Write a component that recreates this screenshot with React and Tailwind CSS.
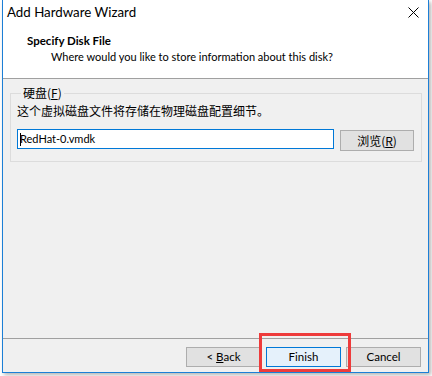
import React from "react";

const font = { fontFamily: 'Lato, "Noto Sans CJK SC", sans-serif' };
const cjk = { fontFamily: '"Noto Sans CJK SC", sans-serif' };

function WinButton({ children, primary }) {
  return (
    <button
      className={
        primary
          ? "h-[20px] w-[75px] border border-[#0078d7] bg-[#e5f1fb] text-[11.5px] leading-none text-black"
          : "h-[20px] w-[75px] border border-[#adadad] bg-[#e1e1e1] text-[11.5px] leading-none text-black"
      }
    >
      {children}
    </button>
  );
}

export default function App() {
  return (
    <div className="relative h-[376px] w-[432px] overflow-hidden bg-white" style={font}>
      {/* dialog window */}
      <div className="ml-[2px] flex h-[373px] w-[427px] flex-col border-x border-b border-[#1c7fd6] bg-[#f0f0f0] shadow-[2px_2px_4px_rgba(0,0,0,0.3)]">
        {/* title bar */}
        <div className="flex h-[30px] items-start justify-between bg-white pl-[4px] pr-[9px]">
          <span className="pt-[4px] text-[13.3px] leading-[17px] text-black">Add Hardware Wizard</span>
          <svg className="mt-[7px]" width="11" height="11" viewBox="0 0 11 11">
            <path d="M0.5 0.5 L10.5 10.5 M10.5 0.5 L0.5 10.5" stroke="#000" strokeWidth="1" />
          </svg>
        </div>

        {/* header */}
        <div className="h-[49px] border-b border-[#a0a0a0] bg-white pt-[3px] text-[11px] leading-[16px] text-black">
          <div className="pl-[24px] text-[11.5px] font-bold">Specify Disk File</div>
          <div className="pl-[48px]">Where would you like to store information about this disk?</div>
        </div>

        {/* body */}
        <div className="flex-1 border-b border-[#a0a0a0] pt-[6px]">
          <fieldset className="ml-[7px] mr-[6px] border border-[#dcdcdc] px-[6px] pb-[10px]">
            <legend className="ml-[4px] px-[2px] text-[12px] leading-[16px] text-black" style={cjk}>
              硬盘(<span className="underline">F</span>)
            </legend>
            <div className="pt-[2px] text-[12px] leading-[16px] text-black" style={cjk}>
              这个虚拟磁盘文件将存储在物理磁盘配置细节。
            </div>
            <div className="mt-[10px] flex items-start gap-[6px]">
              <div className="flex h-[20px] w-[317px] items-center border border-[#0078d7] bg-white pl-[2px] text-[11px] text-black">
                <span className="-mr-px h-[13px] w-px bg-black" />
                RedHat-0.vmdk
              </div>
              <button className="mt-px h-[21px] w-[74px] border border-[#adadad] bg-[#e1e1e1] text-[12px] leading-none text-black" style={cjk}>
                浏览(<span className="underline">R</span>)
              </button>
            </div>
          </fieldset>
        </div>

        {/* footer */}
        <div className="flex h-[33px] justify-end gap-[5px] pr-[7px] pt-[8px]">
          <WinButton>
            &lt; <span className="underline">B</span>ack
          </WinButton>
          <WinButton primary>Finish</WinButton>
          <WinButton>Cancel</WinButton>
        </div>
      </div>

      {/* red highlight annotation */}
      <div className="absolute left-[259px] top-[333px] h-[39px] w-[92px] border-[3px] border-[#ee3b3b]" />
    </div>
  );
}
